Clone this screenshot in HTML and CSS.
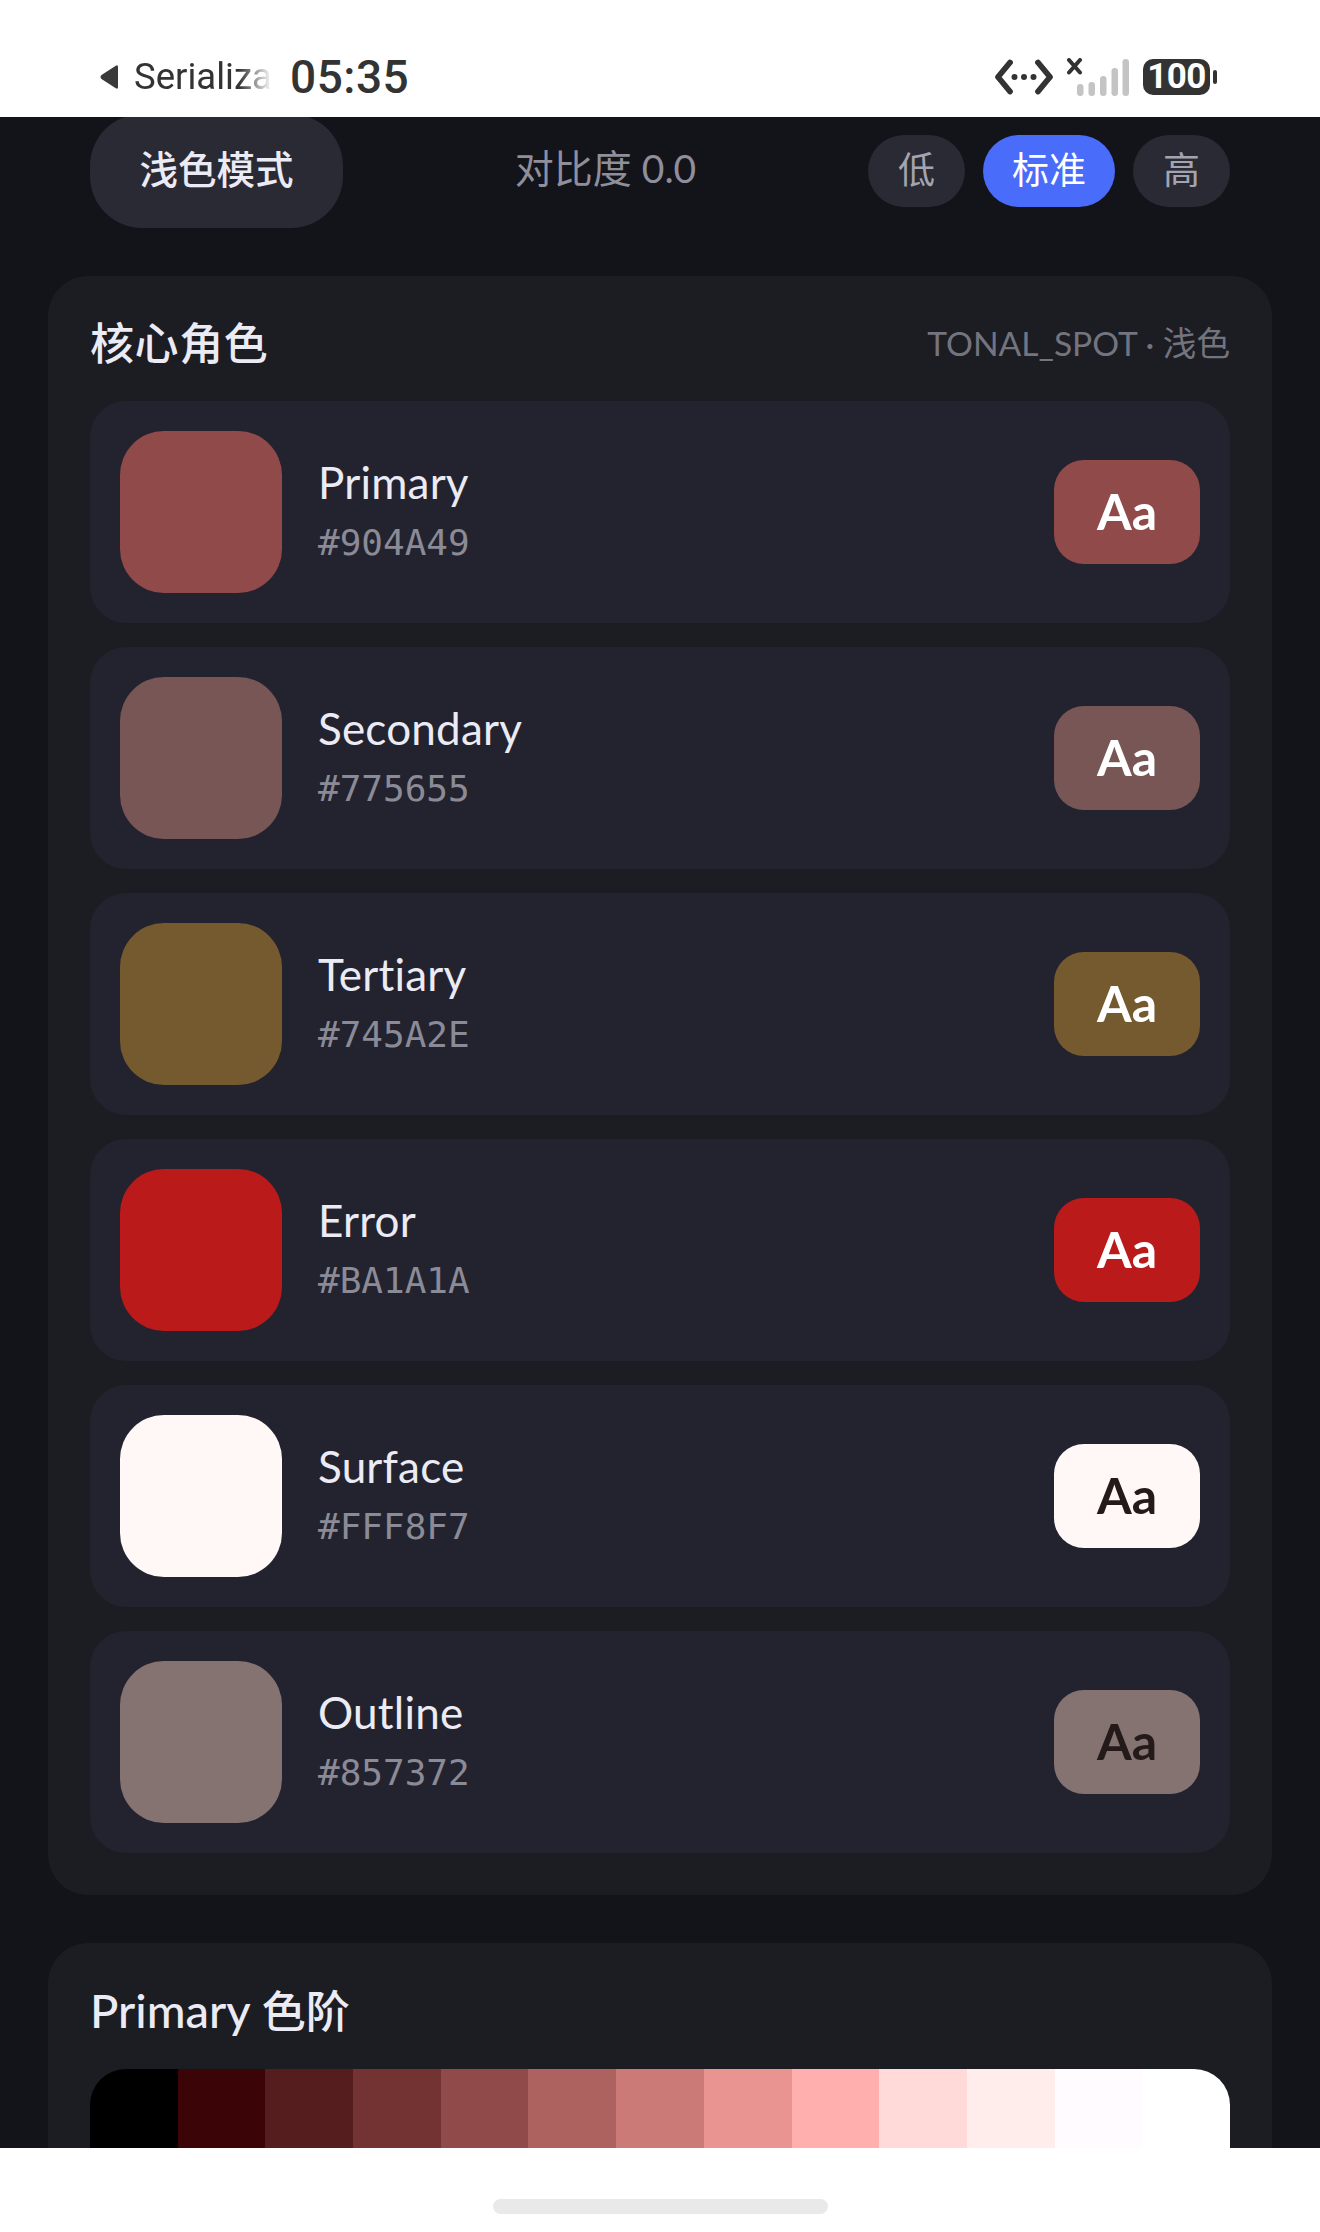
FILE: index.html
```html
<!DOCTYPE html>
<html lang="zh">
<head>
<meta charset="utf-8">
<title>Serialization</title>
<link rel="stylesheet" href="styles.css">
</head>
<body>
<div class="screen">
  <header class="status">
    <div class="status-left">
      <svg class="back" width="21" height="26" viewBox="0 0 21 26"><path d="M19 3V23Q19 25.500 16.800 24.200L2.500 15Q0.500 13 2.500 11L16.800 1.800Q19 0.500 19 3Z" fill="#3a3a3a"/></svg>
      <span class="app-name">Serializa<span class="fade">t</span></span>
      <span class="clock">05:35</span>
    </div>
    <div class="status-right">
      <svg class="code" width="58" height="36" viewBox="0 0 58 36"><path d="M15 3.500 3 18 15 32.500M43 3.500 55 18 43 32.500" fill="none" stroke="#333" stroke-width="5.800" stroke-linecap="round" stroke-linejoin="round"/><circle cx="19.500" cy="18" r="3" fill="#333"/><circle cx="29" cy="18" r="3" fill="#333"/><circle cx="38.500" cy="18" r="3" fill="#333"/></svg>
      <svg class="signal" width="62" height="38" viewBox="0 0 62 38"><path d="M2 2 13 14.500M13 2 2 14.500" stroke="#333" stroke-width="4" stroke-linecap="round"/><g fill="#c4c4c4"><rect x="10" y="26" width="6.500" height="12" rx="3.200"/><rect x="21.500" y="24" width="6.500" height="14" rx="3.200"/><rect x="33" y="18" width="6.500" height="20" rx="3.200"/><rect x="44.500" y="10" width="6.500" height="28" rx="3.200"/><rect x="55.500" y="1" width="6.500" height="37" rx="3.200"/></g></svg>
      <div class="battery"><span class="battery-body">100</span><span class="battery-nub"></span></div>
    </div>
  </header>

  <main class="content">
    <div class="toolbar">
      <button class="mode">浅色模式</button>
      <span class="contrast">对比度 0.0</span>
      <div class="chips">
        <span class="chip">低</span>
        <span class="chip chip-on">标准</span>
        <span class="chip">高</span>
      </div>
    </div>

    <section class="card">
      <div class="card-head">
        <h2 class="card-title">核心角色</h2>
        <span class="card-note">TONAL_SPOT · 浅色</span>
      </div>
      <div class="rows">
        <div class="row">
          <div class="swatch c-primary"></div>
          <div class="names"><div class="name">Primary</div><div class="hex">#904A49</div></div>
          <div class="sample c-primary">Aa</div>
        </div>
        <div class="row">
          <div class="swatch c-secondary"></div>
          <div class="names"><div class="name">Secondary</div><div class="hex">#775655</div></div>
          <div class="sample c-secondary">Aa</div>
        </div>
        <div class="row">
          <div class="swatch c-tertiary"></div>
          <div class="names"><div class="name">Tertiary</div><div class="hex">#745A2E</div></div>
          <div class="sample c-tertiary">Aa</div>
        </div>
        <div class="row">
          <div class="swatch c-error"></div>
          <div class="names"><div class="name">Error</div><div class="hex">#BA1A1A</div></div>
          <div class="sample c-error">Aa</div>
        </div>
        <div class="row">
          <div class="swatch c-surface"></div>
          <div class="names"><div class="name">Surface</div><div class="hex">#FFF8F7</div></div>
          <div class="sample c-surface dark">Aa</div>
        </div>
        <div class="row">
          <div class="swatch c-outline"></div>
          <div class="names"><div class="name">Outline</div><div class="hex">#857372</div></div>
          <div class="sample c-outline dark">Aa</div>
        </div>
      </div>
    </section>

    <section class="card">
      <h2 class="card-title scale-title"><span class="latin">Primary</span> 色阶</h2>
      <div class="scale">
        <span class="t0"></span><span class="t10"></span><span class="t20"></span><span class="t30"></span><span class="t40"></span><span class="t50"></span><span class="t60"></span><span class="t70"></span><span class="t80"></span><span class="t90"></span><span class="t95"></span><span class="t99"></span><span class="t100"></span>
      </div>
    </section>
  </main>

  <footer class="home"><span class="home-bar"></span></footer>
</div>
</body>
</html>
```

FILE: styles.css
```css
* { box-sizing: border-box; }
html, body { margin: 0; padding: 0; background: #fff; }
body { font-family: "Lato", "Noto Sans CJK SC", sans-serif; }

.screen { width: 1320px; height: 2232px; display: flex; flex-direction: column; overflow: hidden; }

/* status bar */
.status { height: 117px; flex: none; background: #fff; display: flex; justify-content: space-between; align-items: center; padding: 37px 103px 0 99px; color: #333; }
.status-left { display: flex; align-items: center; }
.back { margin-right: 14px; }
.app-name { width: 138px; overflow: hidden; white-space: nowrap; font: 400 36.500px/44px "Roboto", sans-serif; color: #333; -webkit-mask-image: linear-gradient(90deg, #000 76%, transparent 100%); mask-image: linear-gradient(90deg, #000 76%, transparent 100%); }
.fade { opacity: .5; }
.clock { margin-left: 18px; font: 500 46px/50px "Roboto", sans-serif; color: #333; letter-spacing: .5px; }
.status-right { display: flex; align-items: center; }
.signal { margin-left: 14px; }
.battery { margin-left: 14px; display: flex; align-items: center; }
.battery-body { width: 67px; height: 36px; border-radius: 10px; background: #333; color: #fff; font: 700 35px/36px "Roboto", sans-serif; text-align: center; letter-spacing: -.5px; }
.battery-nub { width: 4px; height: 14px; margin-left: 3px; border-radius: 2px; background: #333; }

/* content */
.content { flex: 1; min-height: 0; overflow: hidden; background: #13131a; }
.toolbar { display: flex; justify-content: space-between; align-items: center; margin-top: -3px; padding: 0 90px; height: 114px; margin-bottom: 48px; }
.mode { width: 253px; height: 114px; border: 0; border-radius: 52px; background: #2a2a34; color: #ebebf5; font: 500 38.500px/1 "Noto Sans CJK SC", sans-serif; padding: 0 0 8px; }
.contrast { font: 400 39px/1 "Lato", "Noto Sans CJK SC", sans-serif; color: #8f8f9b; padding-bottom: 6px; }
.chips { display: flex; gap: 18px; }
.chip { width: 97px; height: 72px; border-radius: 36px; background: #2a2a34; color: #a4a4b0; font: 400 37px/66px "Noto Sans CJK SC", sans-serif; text-align: center; }
.chip-on { width: 132px; background: #4a6cfa; color: #fff; }

.card { margin: 0 48px 48px; padding: 42px; background: #1c1c23; border-radius: 40px; }
.card-head { display: flex; justify-content: space-between; align-items: center; margin-bottom: 33px; }
.card-title { margin: 0; font: 500 44px/50px "Lato", "Noto Sans CJK SC", sans-serif; letter-spacing: .6px; color: #ebebf5; }
.card-note { font: 400 33.600px/50px "Lato", "Noto Sans CJK SC", sans-serif; color: #74747f; }

.rows { display: flex; flex-direction: column; gap: 24px; }
.row { height: 222px; padding: 0 30px; display: flex; align-items: center; background: #23232f; border-radius: 36px; }
.swatch { width: 162px; height: 162px; flex: none; border-radius: 44px; }
.names { flex: 1; margin: -5px 0 0 36px; }
.name { font: 400 44px/56px "Lato", sans-serif; letter-spacing: .2px; color: #ebebf5; }
.hex { margin-top: 10px; font: 400 36px/46px "DejaVu Sans Mono", monospace; color: #8b8b97; }
.sample { width: 146px; height: 104px; flex: none; border-radius: 30px; color: #fff; text-align: center; font: 700 50px/102px "Lato", sans-serif; }
.sample.dark { color: #231a19; }

.c-primary { background: #904a49; }
.c-secondary { background: #775655; }
.c-tertiary { background: #745a2e; }
.c-error { background: #ba1a1a; }
.c-surface { background: #fff8f7; }
.c-outline { background: #857372; }

/* tonal scale */
.scale-title { line-height: 50px; margin-bottom: 33px; letter-spacing: 0; }
.latin { font-size: 47px; }
.scale { display: grid; grid-template-columns: repeat(13, 1fr); height: 160px; border-radius: 36px; overflow: hidden; }
.t0 { background: #000; }
.t10 { background: #3b0508; }
.t20 { background: #561d1e; }
.t30 { background: #733333; }
.t40 { background: #904a49; }
.t50 { background: #ae6260; }
.t60 { background: #cb7a78; }
.t70 { background: #e99491; }
.t80 { background: #ffafad; }
.t90 { background: #ffdad8; }
.t95 { background: #ffedeb; }
.t99 { background: #fffbff; }
.t100 { background: #fff; }

/* home indicator */
.home { height: 84px; flex: none; background: #fff; display: flex; justify-content: center; padding-top: 51px; }
.home-bar { width: 335px; height: 15px; border-radius: 8px; background: #e9e9e9; }
```
